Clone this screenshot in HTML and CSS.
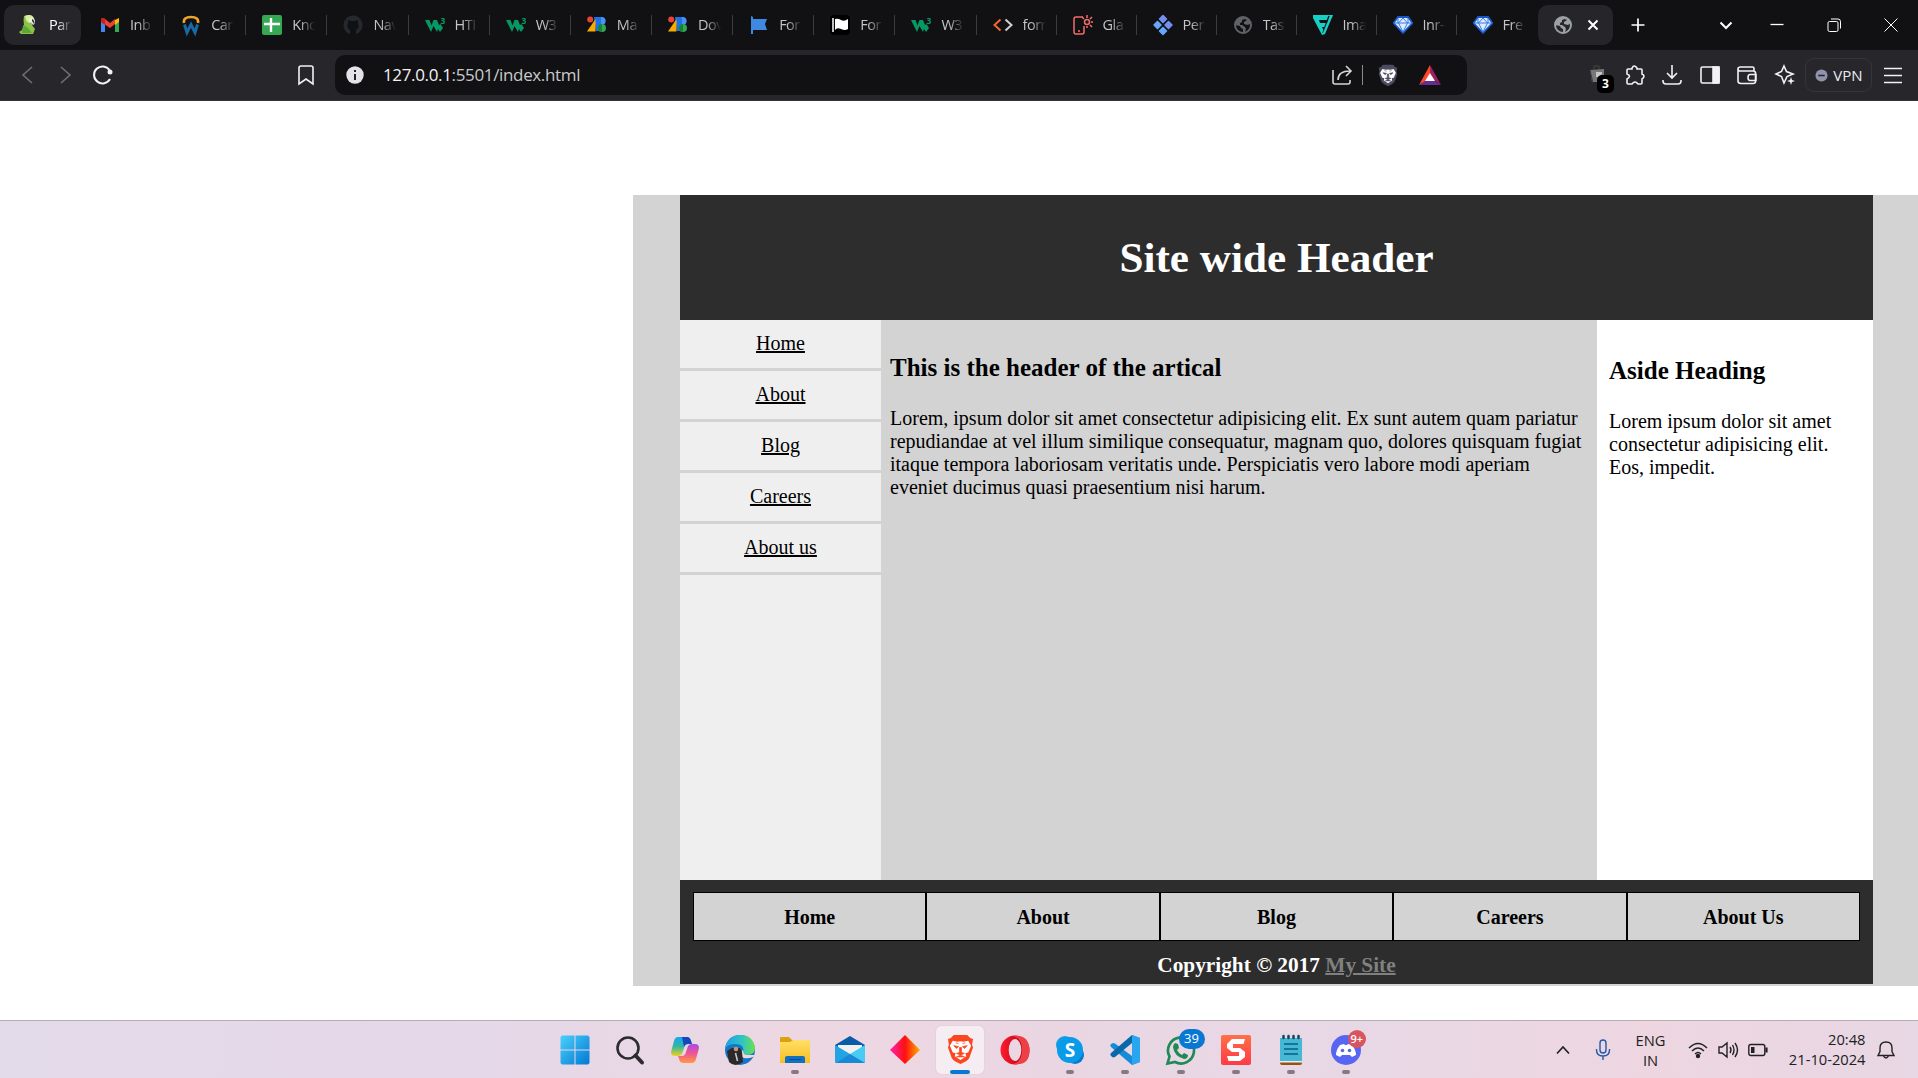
FILE: index.html
```html
<!DOCTYPE html>
<html lang="en">
<head>
<meta charset="utf-8">
<title>Site wide Header</title>
<link rel="stylesheet" href="styles.css">
</head>
<body>
<svg class="defs" width="0" height="0">
  <defs>
    <linearGradient id="gBlue" x1="0" y1="0" x2="1" y2="1"><stop offset="0" stop-color="#4cd0fb"/><stop offset="1" stop-color="#0078d4"/></linearGradient>
    <linearGradient id="gRed" x1="0" y1="0" x2="1" y2="0"><stop offset="0" stop-color="#ff1b2d"/><stop offset="1" stop-color="#a70014"/></linearGradient>
    <linearGradient id="gDiamond" x1="0" y1="0" x2="1" y2="0"><stop offset="0" stop-color="#ff20b0"/><stop offset=".5" stop-color="#ff1010"/><stop offset="1" stop-color="#ffb000"/></linearGradient>
    <linearGradient id="gCopA" x1="0" y1="0" x2="0" y2="1"><stop offset="0" stop-color="#18a5f5"/><stop offset=".5" stop-color="#32b8a0"/><stop offset="1" stop-color="#f4d01c"/></linearGradient>
    <linearGradient id="gCopB" x1="0" y1="0" x2="0" y2="1"><stop offset="0" stop-color="#a64be8"/><stop offset=".5" stop-color="#ee5596"/><stop offset="1" stop-color="#ff9a40"/></linearGradient>
    <linearGradient id="gEdge" x1="0" y1="0" x2="1" y2="0"><stop offset="0" stop-color="#1c9fe2"/><stop offset=".55" stop-color="#2fc3c9"/><stop offset="1" stop-color="#6be04b"/></linearGradient>
    <linearGradient id="gFold" x1="0" y1="0" x2="0" y2="1"><stop offset="0" stop-color="#ffdf67"/><stop offset="1" stop-color="#f9bd23"/></linearGradient>
    <linearGradient id="gSnag" x1="0" y1="0" x2="0" y2="1"><stop offset="0" stop-color="#ff7048"/><stop offset="1" stop-color="#ff3a45"/></linearGradient>
    <symbol id="w3" viewBox="0 0 20 20"><path d="M0 5h4.500l2 5.500L8.500 5H12l2 5 1.500-1 2.500 4-3 4-2-3-1 3-3.500-6L6 17z" fill="#059862"/><text x="15.500" y="9" font-size="8.500" font-weight="700" fill="#059862">3</text></symbol>
    <symbol id="web" viewBox="0 0 20 20"><path d="M7 2h7q4.500 0 4.500 4T14 10v6H9z" fill="#1a73e8"/><path d="M14 2q4.500 0 4.500 4T14 10z" fill="#4d90f5"/><path d="M8.500 4v12.500H0z" fill="#f9ab00"/><circle cx="3.200" cy="4.500" r="3" fill="#ea4335"/><circle cx="15" cy="13" r="4" fill="#34a853"/><path d="M15 9v8a4 4 0 0 1 0-8z" fill="#188038"/></symbol>
    <symbol id="globe" viewBox="0 0 20 20"><circle cx="10" cy="10" r="8" fill="none" stroke="currentColor" stroke-width="2"/><path d="M10 2C4 2 2 6 2 10l5 1 1 2 2 1v3h2l1-3-1-2-3-2H7V8l2-1V5l3-1 2 1-3 2v2l4 1 3-2q-2-6-8-6z" fill="currentColor"/></symbol>
    <symbol id="gem" viewBox="0 0 20 20"><path d="M5 2h10l4.500 6L10 18 .5 8z" fill="#dcebff" stroke="#1657c7" stroke-width="1.800"/><path d="M1 8h18M5.500 8l4.500 9 4.500-9L10 3zM5 3v5M15 3v5" fill="none" stroke="#3b78dc" stroke-width="1"/></symbol>
    <symbol id="lion" viewBox="0 0 28 32"><path d="M7 1h14l3 3 3 1-1 6 1 3-4 11q-2 3-9 6-7-3-9-6L1 14l1-3-1-6 3-1z" fill="var(--shield)"/><path d="M6 7l5 1q3-1 6 0l5-1 3 5-3 7-3 1 1 3-6 4-6-4 1-3-3-1-3-7z" fill="#fff"/><path d="M7 12l5 1-2 2zM21 12l-5 1 2 2zM13 14h2v5l3 1-4 2-4-2 3-1zM9 24l5-2 5 2M9 9l3 1M19 9l-3 1" fill="var(--shield)" stroke="var(--shield)" stroke-width=".8"/></symbol>
  </defs>
</svg>

<div class="tabs">
  <div class="tab first"><svg viewBox="0 0 20 20"><path d="M5 1q7-3 10 2 1 4-2 7l3 4-2 5H2l-2-2 3-2 2-5q-1-5 0-9z" fill="#8bc34a"/><path d="M6 1q7-3 9 3-3-1-4 4-4 0-5-7z" fill="#d8ee9a"/><path d="M10 4q5-3 6 2 0 3-2 4-1-3-4-3z" fill="#eee"/><path d="M13 4q3 1 2 5l-2-3z" fill="#333"/><path d="M4 10q5 2 9 8H3z" fill="#5da638"/></svg><span>Par</span></div>
  <div class="tab"><svg viewBox="0 0 20 20"><path d="M1 6v11h4V9z" fill="#4285f4"/><path d="M19 6v11h-4V9z" fill="#34a853"/><path d="M15 5l4-2v4l-4 3z" fill="#fbbc04"/><path d="M1 7V4q2-2 4 0l5 4 5-4v5l-5 4z" fill="#ea4335"/><path d="M1 4q2-2 4 0v6L1 7z" fill="#c5221f"/></svg><span>Inb</span></div>
  <div class="tab"><svg viewBox="0 0 20 20"><path d="M3 8q-1-6 7-6t7 6" fill="none" stroke="#f0a52a" stroke-width="2.600"/><path d="M3.500 9.500l2.500 8 4-8 4 8 2.500-8" fill="none" stroke="#176aa6" stroke-width="3"/></svg><span>Car</span></div>
  <div class="tab"><svg viewBox="0 0 20 20"><rect width="20" height="20" rx="2" fill="#34a853"/><path d="M9 3v14M2 9h16" stroke="#fff" stroke-width="2.400"/></svg><span>Kno</span></div>
  <div class="tab"><svg viewBox="0 0 20 20"><path d="M7 19A9.500 9.500 0 1 1 13 19v-4q4-2 2-7V5l-3 1H8L5 5v3q-2 5 2 7z" fill="#24292e"/></svg><span>Nav</span></div>
  <div class="tab"><svg><use href="#w3"/></svg><span>HTI</span></div>
  <div class="tab"><svg><use href="#w3"/></svg><span>W3</span></div>
  <div class="tab"><svg><use href="#web"/></svg><span>Ma</span></div>
  <div class="tab"><svg><use href="#web"/></svg><span>Dov</span></div>
  <div class="tab"><svg viewBox="0 0 20 20"><path d="M2 1l2 1v2h14l-2 5 2 6H4v4H2z" fill="#3f8ae0"/></svg><span>For</span></div>
  <div class="tab"><svg viewBox="0 0 20 20"><rect width="20" height="20" rx="4" fill="#000"/><path d="M3 3v14" stroke="#fff" stroke-width="1.500"/><path d="M5 4q3-1 6 1t7-1v10q-3 2-7 0t-6 1z" fill="#fff"/></svg><span>For</span></div>
  <div class="tab"><svg><use href="#w3"/></svg><span>W3</span></div>
  <div class="tab narrow"><svg viewBox="0 0 20 20"><path d="M7.500 4.500l-6 5.500 6 5.500" fill="none" stroke="#f1672f" stroke-width="2"/><path d="M12.500 4.500l6 5.500-6 5.500" fill="none" stroke="#d0d0d0" stroke-width="2"/></svg><span>forr</span></div>
  <div class="tab narrow"><svg viewBox="0 0 20 20" fill="none" stroke="#f46b6b" stroke-width="1.500"><path d="M10 2H3Q1 2 1 4v13q0 2 2 2h6q2 0 2-2v-6M5 16h2"/><circle cx="14" cy="7" r="2.500"/><path d="M14 0v3M14 11v2M18 7h2M17 4l2-2M17 10l2 2M11 4L9 2"/></svg><span>Gla</span></div>
  <div class="tab narrow"><svg viewBox="0 0 20 20" fill="#65a7fb"><g stroke="#65a7fb" stroke-width="1.500" stroke-linejoin="round"><path d="M4.500 6.500L8 10l-3.500 3.500L1 10zM10 12.500l3.500 3.500-3.500 3.500L6.500 16z"/></g><g fill="#738ff3" stroke="#738ff3" stroke-width="1.500" stroke-linejoin="round"><path d="M10 .5L13.500 4 10 7.500 6.500 4zM15.500 6.500L19 10l-3.500 3.500L12 10z"/></g></svg><span>Per</span></div>
  <div class="tab narrow dim"><svg><use href="#globe"/></svg><span>Tas</span></div>
  <div class="tab narrow"><svg viewBox="0 0 20 20"><path d="M0 0h20l-3 5H6l1 3h8l-2 4H9l3 6-3 2L0 3z" fill="#17cfc4"/><path d="M16 1l-6 17" stroke="#111113" stroke-width="1.500"/><path d="M20 0l-8 19-3 1 8-19z" fill="#17cfc4"/></svg><span>Ima</span></div>
  <div class="tab narrow"><svg><use href="#gem"/></svg><span>Inr-</span></div>
  <div class="tab narrow last"><svg><use href="#gem"/></svg><span>Fre</span></div>
  <div class="tab current"><svg class="ico"><use href="#globe"/></svg><svg class="x" viewBox="0 0 12 12"><path d="M1.500 1.500l9 9M10.500 1.500l-9 9"/></svg></div>
  <div class="wincontrols">
    <svg class="plus" viewBox="0 0 14 14"><path d="M7 0.500v13M.5 7h13" stroke-width="1.700"/></svg>
    <svg class="chev" viewBox="0 0 14 14"><path d="M1.500 4.500L7 10l5.500-5.500" stroke-width="2"/></svg>
    <svg viewBox="0 0 14 14"><path d="M.5 6.500h13" stroke-width="1.300"/></svg>
    <svg viewBox="0 0 14 14"><rect x="1" y="3.500" width="10" height="10" rx="1.500"/><path d="M4 1h7q2.500 0 2.500 2.500v7"/></svg>
    <svg viewBox="0 0 14 14"><path d="M.5.5l13 13M13.500.5l-13 13"/></svg>
  </div>
</div>

<div class="toolbar">
  <svg class="nav" viewBox="0 0 20 20"><path d="M14 2l-9 8 9 8"/></svg>
  <svg class="nav" viewBox="0 0 20 20"><path d="M5 2l9 8-9 8"/></svg>
  <svg class="tool reload" viewBox="0 0 20 20"><path d="M16.500 5A8.500 8.500 0 1 0 17 14" stroke-width="2"/><circle cx="17" cy="7" r="2.500" fill="#f2f2f4" stroke="none"/></svg>
  <svg class="mark tool" viewBox="0 0 20 20"><path d="M5 1h10q2 0 2 2v16l-7-5-7 5V3q0-2 2-2z"/></svg>
  <div class="address">
    <svg class="info" viewBox="0 0 18 18"><circle cx="9" cy="9" r="8.700" fill="#e4e2ea"/><path d="M9 8v6M9 4v2" stroke="#222" stroke-width="2"/></svg>
    <span class="url">127.0.0.1<i>:5501/index.html</i></span>
    <svg class="share" viewBox="0 0 20 20"><path d="M1 5v12q0 2 2 2h13q2 0 2-2v-2M6 15q0-9 12-9M14 1l5 5-5 5"/></svg>
    <b class="bar"></b>
    <svg class="shield"><use href="#lion"/></svg>
    <svg class="bat" viewBox="0 0 22 20"><path d="M11 0L0 20l11-6z" fill="#ff4724"/><path d="M11 0l11 20-8-6-3-6z" fill="#9e1f63"/><path d="M0 20h22l-6-4H6z" fill="#662d91"/><path d="M11 8l5 8H6z" fill="#fff"/></svg>
  </div>
  <div class="exts">
    <div class="bag"><svg viewBox="0 0 20 20"><path d="M6 4V1h5v3" stroke="#444" fill="none"/><path d="M2 5l14-1v13H4z" fill="#77777a"/><path d="M8 7h6v2l-3 3H8z" fill="#c6c6c8"/><path d="M2 5l3 13" stroke="#3c3c3f"/></svg><em>3</em></div>
    <svg class="tool" viewBox="0 0 20 20"><path d="M3 4h4V3q2-4 5 0v1h4q1 0 1 1v4q4 2 0 5v4q0 1-1 1h-3q-3-4-6 0H3q-1 0-1-1v-4q5-3 0-5V5q0-1 1-1z"/></svg>
    <svg class="tool" viewBox="0 0 20 20"><path d="M10 0v13M5 8l5 5 5-5M1 15v1q0 3 3 3h12q3 0 3-3v-1"/></svg>
    <svg class="tool" viewBox="0 0 20 20"><rect x="1" y="2" width="18" height="16" rx="1.500"/><path d="M13 2h6v16h-6z" fill="#f2f2f4"/></svg>
    <svg class="tool" viewBox="0 0 20 20"><path d="M17 6V3.500Q17 2 15.500 2H3.500Q1 2 1 4v12q0 2.500 3 2.500h12q2.500 0 2.500-2V8q0-2-2.500-2H3Q1 6 1 4M19 9.500h-6q-2 0-2 3t2 3h6z"/></svg>
    <svg class="tool" viewBox="0 0 20 20"><path d="M9 1l2.500 5.500L18 9l-6 2.500L9 18l-2.500-6.500L1 9l5.500-2.500z"/><path d="M16 12l1 3 3 1-3 1-1 3-1-3-3-1 3-1z" fill="#f2f2f4" stroke="none"/></svg>
  </div>
  <div class="vpn"><svg viewBox="0 0 14 14"><circle cx="7" cy="7" r="6.500" fill="#9193ad"/><path d="M3.500 7h7" stroke="#26262b" stroke-width="1.700"/></svg>VPN</div>
  <svg class="tool menu" viewBox="0 0 20 20"><path d="M1 3.500h18M1 10.500h18M1 17.500h18"/></svg>
</div>

<main class="viewport">
  <div class="wrapper">
    <header><h1>Site wide Header</h1></header>
    <div class="columns">
      <nav><a>Home</a><a>About</a><a>Blog</a><a>Careers</a><a>About us</a></nav>
      <article>
        <h2>This is the header of the artical</h2>
        <p>Lorem, ipsum dolor sit amet consectetur adipisicing elit. Ex sunt autem quam pariatur repudiandae at vel illum similique consequatur, magnam quo, dolores quisquam fugiat itaque tempora laboriosam veritatis unde. Perspiciatis vero labore modi aperiam eveniet ducimus quasi praesentium nisi harum.</p>
      </article>
      <aside>
        <h2>Aside Heading</h2>
        <p>Lorem ipsum dolor sit amet consectetur adipisicing elit. Eos, impedit.</p>
      </aside>
    </div>
    <footer>
      <div class="links"><a>Home</a><a>About</a><a>Blog</a><a>Careers</a><a>About Us</a></div>
      <p class="copy">Copyright © 2017 <a>My Site</a></p>
    </footer>
  </div>
</main>

<div class="taskbar">
  <div class="apps">
    <div class="app"><svg viewBox="0 0 30 30" fill="url(#gBlue)"><path d="M2 .5h12.500v14H.5V2zM15.500.5H28l1.500 1.500v12.500h-14zM.5 15.500h14v14H2L.5 28zM15.500 15.500h14V28L28 29.500H15.500z"/></svg></div>
    <div class="app"><svg viewBox="0 0 30 30" fill="none" stroke="#2c2c2e"><circle cx="13" cy="13" r="10.500" stroke-width="2.600"/><path d="M20.500 20.500l6.500 7" stroke-width="4" stroke-linecap="round"/></svg></div>
    <div class="app"><svg viewBox="0 0 30 30"><path d="M8 2h9q3 0 4 4l1 3h-4q-3 0-4 4l-2 6q-1 2-4 2H5q-4 0-4-4L4 6q1-4 4-4z" fill="url(#gCopA)"/><path d="M12 2h5q3 0 4 4l1 3h-4q-3 0-4 3z" fill="#1648bd"/><path d="M22 28h-9q-3 0-4-4l-1-3h4q3 0 4-4l2-6q1-2 4-2h3q4 0 4 4l-3 11q-1 4-4 4z" fill="url(#gCopB)"/></svg></div>
    <div class="app"><svg viewBox="0 0 30 30"><circle cx="15" cy="15" r="15" fill="#1675c4"/><path d="M0 14Q2 0 15 0t15 13q0 7-8 7-5 0-4-3 2-8-8-8-7 0-10 5z" fill="url(#gEdge)"/><path d="M31 20q-5 4-12 3-3-1-4-5l3-3q0 5 4 5z" fill="#ecd6e2"/><path d="M2 16l5-3h8l2 4 1 10q-8 6-14 0z" fill="#2b2929"/><circle cx="11" cy="14" r="2.300" fill="#c89478"/><path d="M10.500 18l2 8" stroke="#ccc" stroke-width="1.500"/></svg></div>
    <div class="app run"><svg viewBox="0 0 30 30"><path d="M0 3q0-1 1-1h8l3 3h17q1 0 1 1v6H0z" fill="#dda10c"/><path d="M0 7h10l3-2h16q1 0 1 1v22H0z" fill="url(#gFold)"/><path d="M5 28v-5q0-2 2-2h16q2 0 2 2v5z" fill="#1270c0"/><path d="M9 24.500h12" stroke="#0b4b91"/></svg></div>
    <div class="app"><svg viewBox="0 0 30 30"><path d="M0 10l15-9 15 9v8H0z" fill="#0b5ca8"/><path d="M3 10h24v9H3z" fill="#f1f1f1"/><path d="M0 10l30 18H1q-1 0-1-1z" fill="#22a4e4"/><path d="M30 10L15 19l15 9z" fill="#48cbf4"/><path d="M15 19l15 9H1z" fill="#168ad5"/></svg></div>
    <div class="app"><svg viewBox="0 0 30 30"><path d="M15 0l15 15-15 14L0 15z" fill="url(#gDiamond)"/></svg></div>
    <div class="app active"><svg class="brave"><use href="#lion"/></svg></div>
    <div class="app"><svg viewBox="0 0 30 30"><ellipse cx="15" cy="15" rx="14.500" ry="14.500" fill="url(#gRed)"/><path d="M13 1q16-2 16.500 14T13 29q9-2 9-14T13 1z" fill="#ed4045"/><ellipse cx="15" cy="15" rx="6.300" ry="11" fill="#ecd6e2"/></svg></div>
    <div class="app run"><svg viewBox="0 0 30 30"><circle cx="10" cy="10" r="9" fill="#139ee4"/><circle cx="20" cy="20" r="9" fill="#0878cf"/><circle cx="15" cy="15" r="13" fill="#079be8"/><text x="15" y="21.500" text-anchor="middle" font-size="19" font-weight="700" fill="#fff">S</text></svg></div>
    <div class="app run"><svg viewBox="0 0 30 30"><path d="M22 0l8 3v24l-8 3L1 12q-1.500-1.500 0-3l2-1 2 .5L22 21z" fill="#168bd8"/><path d="M22 0v8L5 22l-2 .5L1 21q-1.500-1.500 0-3z" fill="#0868aa"/><path d="M22 0l8 3v24l-8 3z" fill="#2aa5f0"/></svg></div>
    <div class="app run"><svg viewBox="0 0 30 30"><path d="M1.500 28.500l2-7A13 13 0 1 1 9 27z" fill="none" stroke="#1f8a54" stroke-width="2.700"/><path d="M9 8l3 1 1 4-2 2q2 4 5 5l2-2 4 2q0 4-4 4-10-3-11-12 0-2 2-4z" fill="#1f8a54"/></svg><em class="badge blue">39</em></div>
    <div class="app run"><svg viewBox="0 0 30 30"><rect width="30" height="30" rx="2" fill="url(#gSnag)"/><path d="M24 4H11L6 9v4l5 4h7v4H6l1.500 5H19l5-4v-5l-5-4h-7V9h10.500z" fill="#fff"/></svg></div>
    <div class="app run"><svg viewBox="0 0 30 30"><path d="M4 3h22v24H4z" fill="#45b8d5"/><path d="M4 27h22v1q0 2-2 2H6q-2 0-2-2z" fill="#965215"/><path d="M4 26h22v1.500H4z" fill="#eee"/><path d="M8 9h14M8 14h14M8 19h14" stroke="#075f80" stroke-width="1.600"/><path d="M7.500 1v2M12.500 1v2M17.500 1v2M22.500 1v2" stroke="#1a4357" stroke-width="2.500" stroke-linecap="round"/></svg></div>
    <div class="app run"><svg viewBox="0 0 30 30"><circle cx="15" cy="15" r="15" fill="#5865f2"/><path d="M9 10l4-1 1 1h2l1-1 4 1q4 5 4 10l-4 2-2-2h-8l-2 2-4-2q0-5 4-10z" fill="#fff"/><circle cx="11.500" cy="15.500" r="1.800" fill="#5865f2"/><circle cx="18.500" cy="15.500" r="1.800" fill="#5865f2"/></svg><em class="badge red">9+</em></div>
  </div>
  <div class="tray">
    <svg class="up" viewBox="0 0 20 20"><path d="M4 13.500L10 7l6 6.500" stroke-width="1.700"/></svg>
    <svg class="mic" viewBox="0 0 20 20"><rect x="7" y="0" width="6" height="13" rx="3"/><path d="M3.500 9v1q0 6 6.500 6t6.500-6V9M10 16v4"/></svg>
    <div class="lang">ENG<br>IN</div>
    <svg class="sys" viewBox="0 0 20 20"><path d="M1 8q9-9 18 0M4 11q6-6 12 0M7 14q3-3 6 0"/><circle cx="10" cy="16" r="1.500" fill="#222"/></svg>
    <svg class="sys" viewBox="0 0 20 20"><path d="M1 7h3l5-4v14l-5-4H1zM12 7q2 3 0 6M14.500 5q3 5 0 10M17 3q5 7 0 14"/></svg>
    <svg class="sys" viewBox="0 0 20 20"><rect x=".8" y="4.500" width="16" height="11" rx="2"/><path d="M3 7h3.500v6H3z" fill="#222" stroke="none"/><path d="M18.500 7.500v5" stroke-width="2.200"/></svg>
    <div class="clock">20:48<br>21-10-2024</div>
    <svg class="bell" viewBox="0 0 20 20"><path d="M2 15.500h16l-2-4V8q0-6-6-6T4 8v3.500zM7.500 16q2.500 4 5 0"/></svg>
  </div>
</div>
</body>
</html>
```
FILE: styles.css
```css
* { box-sizing: border-box; }
body {
  margin: 0;
  width: 1918px;
  height: 1078px;
  overflow: hidden;
  display: flex;
  flex-direction: column;
  background: #fff;
  font-family: "Open Sans", "Noto Sans", sans-serif;
}
svg { flex: none; overflow: visible; }
.defs { position: absolute; }

/* browser tabs */
.tabs { height: 50px; flex: none; background: #111113; display: flex; align-items: center; }
.tab {
  flex: none;
  width: 81.15px;
  height: 20px;
  padding-left: 16px;
  display: flex;
  align-items: center;
  gap: 10px;
  border-right: 1px solid #3b3b3e;
  color: #c5c5c8;
  font-size: 14.500px;
}
.tab svg { width: 20px; height: 20px; }
.tab span {
  width: 27px;
  white-space: nowrap;
  letter-spacing: -.5px;
  line-height: 20px;
  -webkit-mask-image: linear-gradient(90deg, #000 8px, transparent 23px);
  mask-image: linear-gradient(90deg, #000 8px, transparent 23px);
}
.tab.first { width: 77px; height: 40px; margin: 0 3px 0 4px; border: 0; border-radius: 10px; background: #26262a; color: #fff; }
.tab.first svg { margin-left: -1px; }
.tab.narrow { width: 80px; }
.tab.last { width: 81px; border: 0; }
.tab.dim svg { color: #5f6368; }
.tab.current { width: 75px; height: 40px; border: 0; border-radius: 10px; background: #26262a; padding-left: 15px; gap: 14px; }
.tab.current .ico { color: #9aa0a6; }
.tab.current .x { width: 12px; height: 12px; stroke: #fff; stroke-width: 2; }
.wincontrols { flex: none; display: flex; align-items: center; }
.wincontrols svg { width: 14px; height: 14px; stroke: #fff; fill: none; margin-right: 43px; }
.wincontrols .plus { margin: 0 74px 0 18px; }
.wincontrols .chev { margin-right: 37px; }
.wincontrols svg:last-child { margin-right: 0; }

/* address row */
.toolbar { height: 51px; flex: none; background: #26262b; border-bottom: 1px solid #333338; display: flex; align-items: center; padding-left: 18px; }
.toolbar svg { width: 20px; height: 20px; }
.nav { fill: none; stroke: #6f6f75; stroke-width: 1.600; margin-right: 17.500px; }
.tool { fill: none; stroke: #f2f2f4; stroke-width: 1.600; }
.toolbar .mark { margin: 0 19px 0 183px; }
.address { width: 1132px; height: 40px; border-radius: 10px; background: #111113; display: flex; align-items: center; padding: 0 26px 0 11px; }
.toolbar .info { width: 18px; height: 18px; }
.url { margin: -1px auto 0 19px; font-size: 17px; color: #f3f3f3; letter-spacing: -.35px; }
.url i { font-style: normal; color: #c9c9cc; }
.share { fill: none; stroke: #d5d5d8; stroke-width: 1.600; }
.bar { width: 1px; height: 20px; margin: 0 15px 0 10px; background: #8b8b8f; }
.toolbar .shield { width: 20px; height: 23px; margin-right: 21px; --shield: #4a4a60; }
.toolbar .bat { width: 22px; height: 20px; }
.exts { margin-left: 121px; display: flex; align-items: center; gap: 17.600px; }
.bag { position: relative; width: 20px; height: 20px; margin-right: -1px; }
.bag em { position: absolute; left: 9px; top: 10px; width: 17px; height: 18px; border-radius: 5px; background: #000; color: #fff; font: 700 12px/18px "Open Sans", sans-serif; text-align: center; }
.vpn { width: 67px; height: 34px; margin: 0 10.500px; border: 1px solid #35353b; border-radius: 9px; display: flex; align-items: center; justify-content: center; gap: 5px; color: #ececef; font-size: 15px; }
.toolbar .vpn svg { width: 13px; height: 13px; }

/* site */
.viewport { height: 919px; flex: none; background: #fff; padding-left: 633px; padding-top: 94px; font-family: "Liberation Serif", "Times New Roman", serif; font-size: 20px; line-height: 23px; color: #000; }
.wrapper { height: 791px; background: #d3d3d3; padding: 0 45px 2px 47px; display: flex; flex-direction: column; }
header { height: 125px; background: #2d2d2d; color: #fff; display: flex; align-items: center; justify-content: center; }
h1 { margin: 0; font-size: 43.200px; line-height: 50px; }
.columns { height: 560px; display: grid; grid-template-columns: 201px 716px 276px; }
nav { background: #efefef; }
nav a { display: block; height: 51px; padding-top: 12px; border-bottom: 3px solid #d3d3d3; text-align: center; text-decoration: underline 2px; text-underline-offset: 1px; }
article { padding: 34px 9px; }
aside { background: #fff; padding: 37px 12px; }
h2 { margin: 0 0 25px; font-size: 25px; line-height: 28px; }
p { margin: 0; }
footer { height: 104px; background: #2d2d2d; padding: 12px 13px 0; font-weight: 700; text-align: center; }
.links { height: 49px; display: grid; grid-template: 49px / repeat(5, 1fr); line-height: 49px; }
.links a { border: 1px solid #000; background: #d3d3d3; }
.copy { margin-top: 12px; font-size: 21.300px; line-height: 24px; color: #fff; }
.copy a { color: #808080; text-decoration: underline 2px; }

/* taskbar */
.taskbar { height: 58px; flex: none; border-top: 1px solid #b7abb4; background: linear-gradient(90deg, #e3daea 0, #e5d8e8 25%, #edd7e2 43%, #ead6e3 55%, #e8d8e6 70%, #edd6e0 86%, #e8d7e4 100%); display: flex; align-items: center; padding: 1px 22.500px 0 550px; }
.apps { display: flex; gap: 7.100px; padding-left: .5px; }
.app { position: relative; width: 48px; height: 48px; display: grid; place-items: center; }
.app > svg { width: 30px; height: 30px; margin-top: -1px; }
.app .brave { width: 27px; height: 31px; --shield: #fb4720; }
.app.active { background: #f6edf3; border-radius: 5px; box-shadow: 0 0 1px #b9aab5; }
.app.run::after, .app.active::after { content: ""; position: absolute; left: 20px; bottom: 0; width: 8px; height: 4px; border-radius: 2px; background: #857982; }
.app.active::after { left: 14px; width: 20px; background: #0878d4; }
.badge { position: absolute; font-style: normal; text-align: center; color: #fff; }
.badge.blue { left: 22px; top: 3px; width: 26px; height: 20px; border-radius: 10px; background: #0878d4; font-size: 13px; line-height: 19px; }
.badge.red { left: 26px; top: 4px; width: 18px; height: 18px; border-radius: 9px; background: #d85560; font-size: 11px; font-weight: 600; line-height: 17px; }
.tray { margin-left: auto; display: flex; align-items: center; color: #202022; font-size: 14.700px; line-height: 20px; }
.tray svg { width: 20px; height: 20px; fill: none; stroke: #222; stroke-width: 1.400; }
.tray .mic { margin-left: 20px; stroke: #2458a8; }
.lang { width: 36px; margin: -1px 19px 0 20px; text-align: center; }
.tray .sys { margin-right: 10px; }
.clock { width: 88px; margin-top: -2px; text-align: right; white-space: nowrap; }
.tray .bell { margin-left: 10px; }
```
